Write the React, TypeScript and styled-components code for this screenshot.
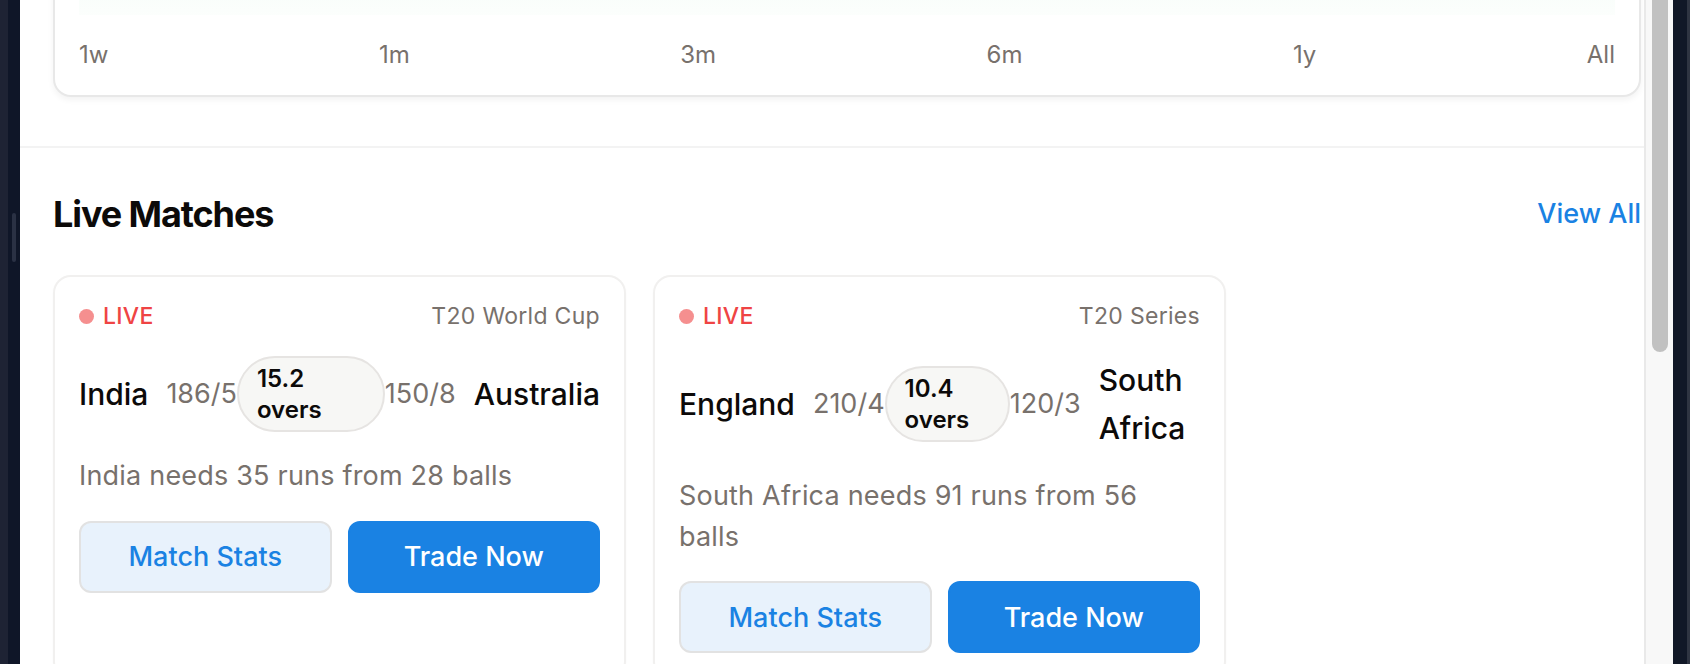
import React from "react";
import styled, { createGlobalStyle, css } from "styled-components";

const GlobalStyle = createGlobalStyle`
  * { box-sizing: border-box; }
  html, body {
    margin: 0;
    padding: 0;
    width: 1690px;
    height: 664px;
    overflow: hidden;
    background: #111827;
  }
  body {
    font-family: Inter, "Noto Sans", "Liberation Sans", sans-serif;
    -webkit-font-smoothing: antialiased;
  }
`;

const Screen = styled.div`
  display: flex;
  width: 1690px;
  height: 664px;
  overflow: hidden;
  background: #111827;
`;

const LeftRail = styled.div`
  display: flex;
  flex: 0 0 20px;
  height: 100%;
`;

const RailEdge = styled.div`
  flex: 0 0 8px;
  background: #1e2334;
`;

const RailInner = styled.div`
  flex: 1;
  display: flex;
  justify-content: center;
  padding-top: 213px;
  background: #0f1628;
`;

const RailThumb = styled.div`
  width: 4px;
  height: 49px;
  border-radius: 2px;
  background: #2a3144;
`;

const Frame = styled.div`
  flex: 0 0 1653px;
  display: flex;
  align-items: flex-start;
  height: 100%;
  overflow: hidden;
  background: #ffffff;
`;

const Content = styled.main`
  flex: 1;
  min-width: 0;
  display: flex;
  flex-direction: column;
  margin-top: -251px;
`;

const ScrollTrack = styled.div`
  flex: 0 0 29px;
  align-self: stretch;
  display: flex;
  padding-left: 6px;
  background: #f8f8f8;
  border-left: 2px solid #e9e9e9;
`;

const ScrollThumb = styled.div`
  width: 16px;
  height: 372px;
  margin-top: -20px;
  border-radius: 8px;
  background: #c1c1c1;
`;

const RightRail = styled.div`
  display: flex;
  flex: 0 0 17px;
  height: 100%;
`;

const RightDark = styled.div`
  flex: 0 0 14px;
  background: #111827;
`;

const RightEdge = styled.div`
  flex: 1;
  background: #2f3542;
`;

const ChartSection = styled.section`
  padding: 0 3px 49px 33px;
  border-bottom: 2px solid #f3f3f3;
`;

const ChartCard = styled.div`
  padding: 24px;
  background: #ffffff;
  border: 2px solid #e8e8e8;
  border-radius: 18px;
  box-shadow: 0 3px 6px rgba(0, 0, 0, 0.05);
`;

const ChartArea = styled.div`
  height: 240px;
`;

const ChartSvg = styled.svg`
  display: block;
  width: 100%;
  height: 100%;
`;

const AxisRow = styled.div`
  display: flex;
  justify-content: space-between;
  margin-top: 24px;
  font-size: 24px;
  line-height: 32px;
  color: #78716c;
`;

const LiveSection = styled.section`
  padding: 42px 3px 0 33px;
`;

const HeaderRow = styled.div`
  display: flex;
  align-items: center;
  justify-content: space-between;
  margin-bottom: 37px;
`;

const Heading = styled.h2`
  margin: 0;
  font-size: 36px;
  line-height: 48px;
  font-weight: 700;
  letter-spacing: -1.1px;
  color: #0c0a09;
`;

const ViewAll = styled.a`
  font-size: 27px;
  line-height: 40px;
  font-weight: 500;
  color: #1a82e3;
  text-decoration: none;
  cursor: pointer;
`;

const CardsRow = styled.div`
  display: flex;
  gap: 27px;
  align-items: stretch;
`;

const MatchCard = styled.article`
  width: 573px;
  display: flex;
  flex-direction: column;
  gap: 24px;
  padding: 24px;
  background: #ffffff;
  border: 2px solid #f1f0ef;
  border-radius: 18px;
  box-shadow: 0 1px 2px rgba(0, 0, 0, 0.03);
`;

const MetaRow = styled.div`
  display: flex;
  align-items: center;
  justify-content: space-between;
  font-size: 23px;
  line-height: 31px;
  letter-spacing: 0.3px;
`;

const LiveBadge = styled.span`
  display: flex;
  align-items: center;
  gap: 9px;
  color: #ef4444;
  font-weight: 500;
`;

const LiveDot = styled.span`
  width: 15px;
  height: 15px;
  border-radius: 50%;
  background: #ef4444;
  opacity: 0.6;
`;

const League = styled.span`
  color: #78716c;
`;

const ScoreRow = styled.div`
  display: flex;
  align-items: center;
  justify-content: space-between;
`;

const TeamSide = styled.div`
  display: flex;
  align-items: center;
  gap: 18px;
`;

const TeamName = styled.span`
  font-size: 30px;
  line-height: 48px;
  font-weight: 500;
  color: #0c0a09;
`;

const Score = styled.span`
  font-size: 27px;
  line-height: 40px;
  color: #78716c;
`;

const OversPill = styled.span`
  padding: 5px 18px;
  font-size: 24px;
  line-height: 31px;
  font-weight: 600;
  color: #0c0a09;
  background: #f7f7f5;
  border: 2px solid #e6e4e2;
  border-radius: 999px;
`;

const Situation = styled.p`
  margin: 0;
  font-size: 27px;
  line-height: 40.5px;
  letter-spacing: 0.2px;
  color: #78716c;
`;

const ButtonRow = styled.div`
  display: flex;
  gap: 16px;
`;

const ActionButton = styled.button<{ $variant: "primary" | "secondary" }>`
  flex: 1;
  height: 72px;
  border-radius: 12px;
  font-family: inherit;
  font-size: 27px;
  font-weight: 500;
  cursor: pointer;
  ${({ $variant }) =>
    $variant === "primary"
      ? css`
          background: #1a82e3;
          border: 2px solid #1a82e3;
          color: #ffffff;
        `
      : css`
          background: #e8f2fc;
          border: 2px solid #e2e2e2;
          color: #1a82e3;
        `}
`;

type Match = {
  league: string;
  home: string;
  homeScore: string;
  away: string;
  awayScore: string;
  overs: string;
  situation: string;
};

const matches: Match[] = [
  {
    league: "T20 World Cup",
    home: "India",
    homeScore: "186/5",
    away: "Australia",
    awayScore: "150/8",
    overs: "15.2 overs",
    situation: "India needs 35 runs from 28 balls",
  },
  {
    league: "T20 Series",
    home: "England",
    homeScore: "210/4",
    away: "South Africa",
    awayScore: "120/3",
    overs: "10.4 overs",
    situation: "South Africa needs 91 runs from 56 balls",
  },
];

const ranges = ["1w", "1m", "3m", "6m", "1y", "All"];

function MatchCardView({ m }: { m: Match }) {
  return (
    <MatchCard>
      <MetaRow>
        <LiveBadge>
          <LiveDot />
          LIVE
        </LiveBadge>
        <League>{m.league}</League>
      </MetaRow>
      <ScoreRow>
        <TeamSide>
          <TeamName>{m.home}</TeamName>
          <Score>{m.homeScore}</Score>
        </TeamSide>
        <OversPill>{m.overs}</OversPill>
        <TeamSide>
          <Score>{m.awayScore}</Score>
          <TeamName>{m.away}</TeamName>
        </TeamSide>
      </ScoreRow>
      <Situation>{m.situation}</Situation>
      <ButtonRow>
        <ActionButton $variant="secondary">Match Stats</ActionButton>
        <ActionButton $variant="primary">Trade Now</ActionButton>
      </ButtonRow>
    </MatchCard>
  );
}

export default function App() {
  return (
    <>
      <GlobalStyle />
      <Screen>
        <LeftRail>
          <RailEdge />
          <RailInner>
            <RailThumb />
          </RailInner>
        </LeftRail>
        <Frame>
          <Content>
            <ChartSection>
              <ChartCard>
                <ChartArea>
                  <ChartSvg viewBox="0 0 1000 240" preserveAspectRatio="none">
                    <defs>
                      <linearGradient id="areaFill" x1="0" y1="0" x2="0" y2="1">
                        <stop offset="0%" stopColor="#22c55e" stopOpacity="0.14" />
                        <stop offset="100%" stopColor="#22c55e" stopOpacity="0.015" />
                      </linearGradient>
                    </defs>
                    <path
                      d="M0 150 L90 135 L180 142 L270 110 L360 118 L450 90 L540 96 L630 70 L720 80 L810 55 L900 62 L1000 40 L1000 240 L0 240 Z"
                      fill="url(#areaFill)"
                    />
                    <path
                      d="M0 150 L90 135 L180 142 L270 110 L360 118 L450 90 L540 96 L630 70 L720 80 L810 55 L900 62 L1000 40"
                      fill="none"
                      stroke="#22c55e"
                      strokeWidth="2"
                      vectorEffect="non-scaling-stroke"
                    />
                  </ChartSvg>
                </ChartArea>
                <AxisRow>
                  {ranges.map((r) => (
                    <span key={r}>{r}</span>
                  ))}
                </AxisRow>
              </ChartCard>
            </ChartSection>
            <LiveSection>
              <HeaderRow>
                <Heading>Live Matches</Heading>
                <ViewAll>View All</ViewAll>
              </HeaderRow>
              <CardsRow>
                {matches.map((m) => (
                  <MatchCardView key={m.home} m={m} />
                ))}
              </CardsRow>
            </LiveSection>
          </Content>
          <ScrollTrack>
            <ScrollThumb />
          </ScrollTrack>
        </Frame>
        <RightRail>
          <RightDark />
          <RightEdge />
        </RightRail>
      </Screen>
    </>
  );
}
